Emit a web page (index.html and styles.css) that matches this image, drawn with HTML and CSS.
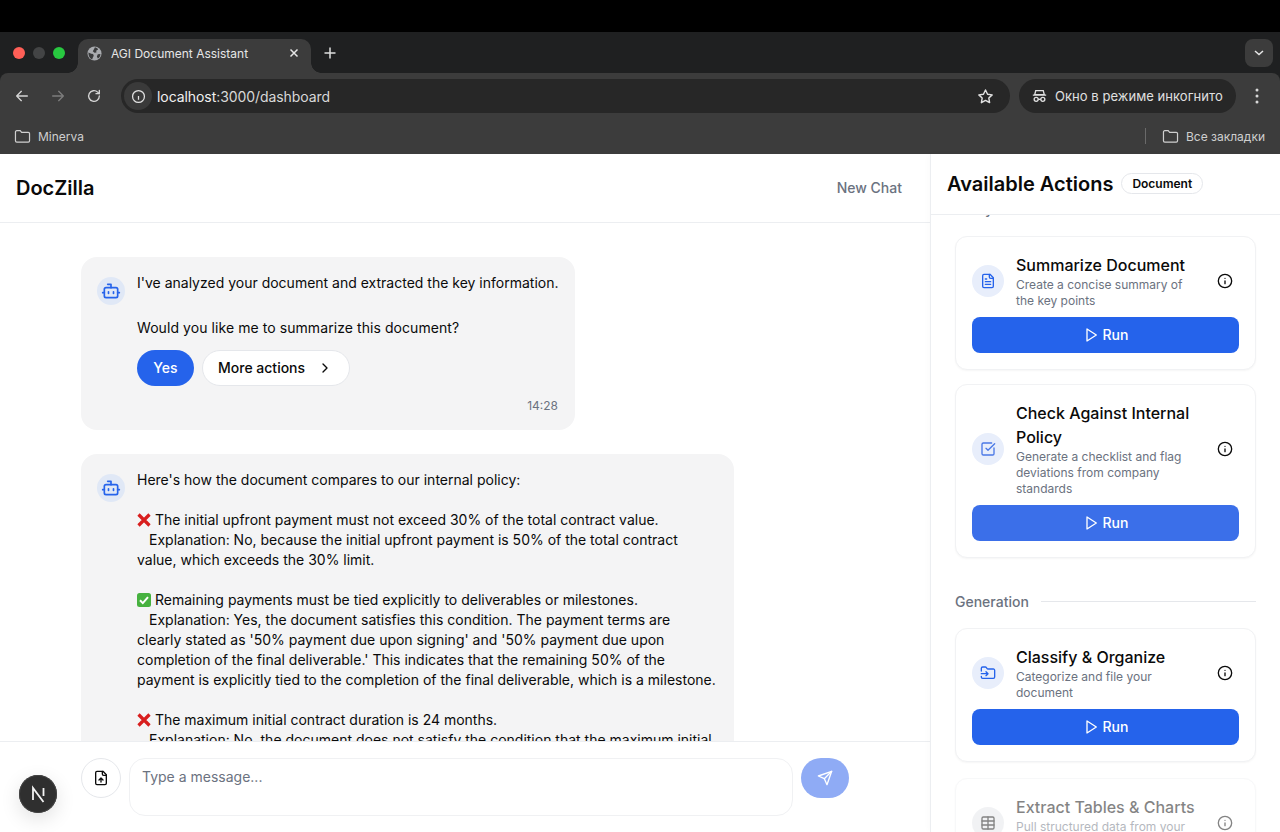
FILE: index.html
```html
<!DOCTYPE html>
<html lang="en">
<head>
<meta charset="utf-8">
<title>AGI Document Assistant</title>
<link rel="stylesheet" href="styles.css">
</head>
<body>
<svg class="sprite" aria-hidden="true">
  <symbol id="i-bot" viewBox="0 0 24 24"><path d="M12 8V4H8"/><rect x="4" y="8" width="16" height="12" rx="2"/><path d="M2 14h2M20 14h2M15 13v2M9 13v2"/></symbol>
  <symbol id="i-file" viewBox="0 0 24 24"><path d="M15 2H6a2 2 0 0 0-2 2v16a2 2 0 0 0 2 2h12a2 2 0 0 0 2-2V7Z"/><path d="M14 2v4a2 2 0 0 0 2 2h4M10 9H8M16 13H8M16 17H8"/></symbol>
  <symbol id="i-check" viewBox="0 0 24 24"><path d="M21 10.5V19a2 2 0 0 1-2 2H5a2 2 0 0 1-2-2V5a2 2 0 0 1 2-2h12.5"/><path d="m9 11 3 3L22 4"/></symbol>
  <symbol id="i-folder-in" viewBox="0 0 24 24"><path d="M2 9V5a2 2 0 0 1 2-2h3.9a2 2 0 0 1 1.69.9l.81 1.2a2 2 0 0 0 1.67.9H20a2 2 0 0 1 2 2v10a2 2 0 0 1-2 2H4a2 2 0 0 1-2-2v-1"/><path d="M2 13h10M9 16l3-3-3-3"/></symbol>
  <symbol id="i-table" viewBox="0 0 24 24"><rect x="3" y="3" width="18" height="18" rx="2"/><path d="M12 3v18M3 9h18M3 15h18"/></symbol>
  <symbol id="i-info" viewBox="0 0 24 24"><circle cx="12" cy="12" r="10"/><path d="M12 16v-4M12 8h.01"/></symbol>
  <symbol id="i-play" viewBox="0 0 24 24"><path d="M6 3l14 9-14 9V3Z"/></symbol>
  <symbol id="i-send" viewBox="0 0 24 24"><path d="m22 2-7 20-4-9-9-4Z"/><path d="M22 2 11 13"/></symbol>
  <symbol id="i-chevron" viewBox="0 0 24 24"><path d="m9 18 6-6-6-6"/></symbol>
  <symbol id="i-file-up" viewBox="0 0 24 24"><path d="M15 2H6a2 2 0 0 0-2 2v16a2 2 0 0 0 2 2h12a2 2 0 0 0 2-2V7Z"/><path d="M14 2v4a2 2 0 0 0 2 2h4M12 12v6M15 15l-3-3-3 3"/></symbol>
  <symbol id="i-folder" viewBox="0 0 18 16"><path d="M1.500 3.200c0-.8.6-1.400 1.400-1.400h3.600l1.600 1.800h7.100c.8 0 1.300.6 1.300 1.300v7.700c0 .8-.6 1.400-1.300 1.400H2.900c-.8 0-1.400-.6-1.400-1.400Z"/></symbol>
  <symbol id="i-no" viewBox="0 0 14 14"><path class="no-mark" d="M1.500 1.500 12.500 12.500M12.500 1.500 1.500 12.500"/></symbol>
  <symbol id="i-yes" viewBox="0 0 14 14"><rect class="yes-box" x="0" y="0" width="14" height="14" rx="2.500"/><path class="yes-mark" d="m3 7.300 2.800 2.800L11 4.200"/></symbol>
</svg>

<div class="top-black"></div>

<div class="tabstrip">
  <div class="lights">
    <span class="light light-red"></span>
    <span class="light light-grey"></span>
    <span class="light light-green"></span>
  </div>
  <div class="tab">
    <svg class="globe" viewBox="0 0 16 16"><circle cx="8" cy="8" r="7.500" fill="#a9abaf"/><path d="M8.500 1.200c2 .5 3 1.300 3.300 2.600L9.800 5.100l.3 1.700-2.200.4L6.200 5.600l.9-1.500ZM1.500 7l3 1.300 2 .3.700 1.700L6 12.700l-.5 1.800C3 13.300 1.400 10.800 1.500 7ZM11.500 8.800l2.800-.4c0 2-1 3.900-2.700 5l-1.100-2.100Z" fill="#3a3b3c"/></svg>
    <span class="tab-title">AGI Document Assistant</span>
    <svg class="tab-close" viewBox="0 0 10 10"><path d="M1.500 1.500l7 7M8.500 1.500l-7 7"/></svg>
  </div>
  <svg class="new-tab" viewBox="0 0 12 12"><path d="M6 .5v11M.5 6h11"/></svg>
  <div class="strip-spacer"></div>
  <div class="tab-menu"><svg viewBox="0 0 10 6"><path d="M1 1l4 3.600L9 1"/></svg></div>
</div>

<div class="toolbar">
  <svg class="nav-icon" viewBox="0 0 24 24"><path d="M20 12H4M11 5l-7 7 7 7"/></svg>
  <svg class="nav-icon nav-off" viewBox="0 0 24 24"><path d="M4 12h16M13 5l7 7-7 7"/></svg>
  <svg class="nav-icon" viewBox="0 0 24 24"><path d="M20 12a8 8 0 1 1-2.500-5.800L20 8.500"/><path d="M20 3.500v5h-5"/></svg>
  <div class="omnibox">
    <span class="site-info"><svg viewBox="0 0 24 24"><circle cx="12" cy="12" r="9.500"/><path d="M12 17v-6M12 7.500h.01"/></svg></span>
    <span class="url"><span class="url-host">localhost</span><span class="url-rest">:3000/dashboard</span></span>
    <svg class="star" viewBox="0 0 24 24"><path d="m12 2.800 2.900 6 6.500.9-4.700 4.500 1.100 6.500-5.800-3.100-5.800 3.100 1.100-6.500L2.600 9.700l6.500-.9Z"/></svg>
  </div>
  <div class="incognito">
    <svg class="hat" viewBox="0 0 18 16"><path d="M4.500 1.500h9l1.300 5H3.200ZM1 7h16"/><circle cx="5" cy="12" r="2.400"/><circle cx="13" cy="12" r="2.400"/><path d="M7.400 12h3.200"/></svg>
    <span>Окно в режиме инкогнито</span>
  </div>
  <svg class="kebab" viewBox="0 0 4 16"><circle cx="2" cy="2" r="1.500"/><circle cx="2" cy="8" r="1.500"/><circle cx="2" cy="14" r="1.500"/></svg>
</div>

<div class="bookmarks">
  <svg class="bm-folder"><use href="#i-folder"/></svg>
  <span class="bm-label">Minerva</span>
  <div class="strip-spacer"></div>
  <span class="bm-divider"></span>
  <svg class="bm-folder"><use href="#i-folder"/></svg>
  <span class="bm-label">Все закладки</span>
</div>

<div class="app">
  <main class="chat">
    <header class="chat-head">
      <h1 class="brand">DocZilla</h1>
      <span class="new-chat">New Chat</span>
    </header>

    <div class="messages">
      <article class="bubble bubble-first">
        <span class="avatar"><svg class="icon icon-blue"><use href="#i-bot"/></svg></span>
        <div class="bubble-body">
          <p class="line">I've analyzed your document and extracted the key information.</p>
          <p class="line line-question">Would you like me to summarize this document?</p>
          <div class="quick">
            <span class="pill pill-yes">Yes</span>
            <span class="pill pill-more">More actions <svg class="icon"><use href="#i-chevron"/></svg></span>
          </div>
          <time class="stamp">14:28</time>
        </div>
      </article>

      <article class="bubble bubble-second">
        <span class="avatar"><svg class="icon icon-blue"><use href="#i-bot"/></svg></span>
        <div class="bubble-body">
          <p class="line">Here's how the document compares to our internal policy:</p>
          <p class="line block"><svg class="emoji"><use href="#i-no"/></svg> The initial upfront payment must not exceed 30% of the total contract value.<br><span class="indent"></span>Explanation: No, because the initial upfront payment is 50% of the total contract value, which exceeds the 30% limit.</p>
          <p class="line block"><svg class="emoji"><use href="#i-yes"/></svg> Remaining payments must be tied explicitly to deliverables or milestones.<br><span class="indent"></span>Explanation: Yes, the document satisfies this condition. The payment terms are clearly stated as '50% payment due upon signing' and '50% payment due upon completion of the final deliverable.' This indicates that the remaining 50% of the payment is explicitly tied to the completion of the final deliverable, which is a milestone.</p>
          <p class="line block"><svg class="emoji"><use href="#i-no"/></svg> The maximum initial contract duration is 24 months.<br><span class="indent"></span>Explanation: No, the document does not satisfy the condition that the maximum initial contract duration is 24 months.</p>
        </div>
      </article>
    </div>

    <footer class="composer">
      <span class="attach"><svg class="icon icon-dark"><use href="#i-file-up"/></svg></span>
      <div class="input">Type a message...</div>
      <span class="send"><svg class="icon icon-white"><use href="#i-send"/></svg></span>
    </footer>
  </main>

  <aside class="panel">
    <header class="panel-head">
      <h2 class="panel-title">Available Actions</h2>
      <span class="badge">Document</span>
    </header>
    <div class="panel-scroll">
      <div class="section-label section-clipped"><span>Analysis</span></div>

      <section class="card">
        <div class="card-row">
          <span class="card-icon"><svg class="icon icon-blue"><use href="#i-file"/></svg></span>
          <div class="card-text">
            <h3 class="card-title">Summarize Document</h3>
            <p class="card-desc">Create a concise summary of the key points</p>
          </div>
          <span class="card-info"><svg class="icon"><use href="#i-info"/></svg></span>
        </div>
        <div class="run"><svg class="icon"><use href="#i-play"/></svg>Run</div>
      </section>

      <section class="card card-entering">
        <div class="card-row">
          <span class="card-icon"><svg class="icon icon-soft"><use href="#i-check"/></svg></span>
          <div class="card-text">
            <h3 class="card-title">Check Against Internal Policy</h3>
            <p class="card-desc">Generate a checklist and flag deviations from company standards</p>
          </div>
          <span class="card-info"><svg class="icon"><use href="#i-info"/></svg></span>
        </div>
        <div class="run run-soft"><svg class="icon"><use href="#i-play"/></svg>Run</div>
      </section>

      <div class="section-label"><span>Generation</span></div>

      <section class="card">
        <div class="card-row">
          <span class="card-icon"><svg class="icon icon-blue"><use href="#i-folder-in"/></svg></span>
          <div class="card-text">
            <h3 class="card-title">Classify &amp; Organize</h3>
            <p class="card-desc">Categorize and file your document</p>
          </div>
          <span class="card-info"><svg class="icon"><use href="#i-info"/></svg></span>
        </div>
        <div class="run"><svg class="icon"><use href="#i-play"/></svg>Run</div>
      </section>

      <section class="card card-faded">
        <div class="card-row">
          <span class="card-icon"><svg class="icon"><use href="#i-table"/></svg></span>
          <div class="card-text">
            <h3 class="card-title">Extract Tables &amp; Charts</h3>
            <p class="card-desc">Pull structured data from your document</p>
          </div>
          <span class="card-info"><svg class="icon"><use href="#i-info"/></svg></span>
        </div>
        <div class="run"><svg class="icon"><use href="#i-play"/></svg>Run</div>
      </section>
    </div>
  </aside>
</div>

<div class="next-badge">
  <svg viewBox="0 0 38 38"><path class="next-n" d="M14 25V13l10.500 14M24.500 13v8"/></svg>
</div>
</body>
</html>
```

FILE: styles.css
```css
* { box-sizing: border-box; }

html, body {
  margin: 0;
  height: 832px;
  overflow: hidden;
}

body {
  display: flex;
  flex-direction: column;
  background: #1f2021;
  color: #0a0a0a;
  font-family: Inter, "Liberation Sans", sans-serif;
}

h1, h2, h3, p { margin: 0; }

.sprite { display: none; }

/* ---------- icons ---------- */
.icon {
  width: 16px;
  height: 16px;
  flex: none;
  fill: none;
  stroke: currentColor;
  stroke-width: 2;
  stroke-linecap: round;
  stroke-linejoin: round;
}
.icon-blue { color: #2563eb; }
.icon-soft { color: #4a78e6; }
.icon-dark { color: #0a0a0a; }
.icon-white { color: #fff; }

/* ---------- browser chrome ---------- */
.top-black { height: 32px; flex: none; background: #000; }

.tabstrip {
  height: 41px;
  flex: none;
  display: flex;
  align-items: flex-end;
  background: #1f2021;
  color: #e6e6e6;
}

.lights {
  display: flex;
  gap: 8px;
  align-self: center;
  padding-left: 13px;
  width: 78px;
}
.light { width: 12px; height: 12px; border-radius: 50%; }
.light-red { background: #ff5f57; }
.light-grey { background: #434445; }
.light-green { background: #28c840; }

.tab {
  position: relative;
  width: 233px;
  height: 34px;
  display: flex;
  align-items: center;
  padding: 0 12px 6px 9px;
  background: #3c3c3c;
  border-radius: 10px 10px 0 0;
  font-size: 12px;
}
.tab::before,
.tab::after {
  content: "";
  position: absolute;
  bottom: 0;
  width: 10px;
  height: 10px;
}
.tab::before {
  left: -10px;
  background: radial-gradient(circle at 0 0, #1f2021 9.500px, #3c3c3c 10px);
}
.tab::after {
  right: -10px;
  background: radial-gradient(circle at 100% 0, #1f2021 9.500px, #3c3c3c 10px);
}
.globe { width: 15px; height: 15px; flex: none; }
.tab-title { flex: 1; padding-left: 9px; white-space: nowrap; }
.tab-close {
  width: 10px;
  height: 10px;
  fill: none;
  stroke: #e6e6e6;
  stroke-width: 1.500;
}

.new-tab {
  width: 12px;
  height: 12px;
  margin: 0 0 14px 13px;
  fill: none;
  stroke: #dedede;
  stroke-width: 1.500;
}

.strip-spacer { flex: 1; }

.tab-menu {
  width: 28px;
  height: 28px;
  margin: 0 7px 6px 0;
  display: flex;
  align-items: center;
  justify-content: center;
  border-radius: 8px;
  background: #3c3c3c;
}
.tab-menu svg {
  width: 10px;
  height: 6px;
  fill: none;
  stroke: #e6e6e6;
  stroke-width: 1.500;
}

.toolbar {
  height: 40px;
  flex: none;
  display: flex;
  align-items: flex-end;
  padding-left: 14px;
  background: #3c3c3c;
  border-radius: 8px 8px 0 0;
}

.nav-icon {
  width: 16px;
  height: 16px;
  margin: 0 20px 9px 0;
  fill: none;
  stroke: #d4d4d4;
  stroke-width: 2;
  stroke-linecap: round;
  stroke-linejoin: round;
}
.nav-off { stroke: #7c7c7c; }
.nav-icon:nth-child(3) { margin-right: 19px; }

.omnibox {
  width: 889px;
  height: 34px;
  display: flex;
  align-items: center;
  padding: 0 16px 0 3px;
  border-radius: 17px;
  background: #272727;
}
.site-info {
  width: 28px;
  height: 28px;
  display: flex;
  align-items: center;
  justify-content: center;
  border-radius: 50%;
  background: #3a3a3a;
}
.site-info svg {
  width: 15px;
  height: 15px;
  fill: none;
  stroke: #e2e2e2;
  stroke-width: 2;
}
.url {
  flex: 1;
  padding-left: 5px;
  font-size: 14px;
  letter-spacing: -.07px;
}
.url-host { color: #f0f0f0; }
.url-rest { color: #d8d8d8; }
.star {
  width: 17px;
  height: 17px;
  fill: none;
  stroke: #e2e2e2;
  stroke-width: 2;
  stroke-linejoin: round;
}

.incognito {
  width: 217px;
  height: 34px;
  margin-left: 9px;
  display: flex;
  align-items: center;
  gap: 8px;
  padding-left: 13px;
  border-radius: 17px;
  background: #272727;
  color: #e0e0e0;
  font-size: 13px;
  letter-spacing: .05px;
  white-space: nowrap;
}
.hat {
  width: 15px;
  height: 14px;
  flex: none;
  fill: none;
  stroke: #e0e0e0;
  stroke-width: 1.600;
}

.kebab {
  width: 4px;
  height: 16px;
  margin: 0 0 9px 19px;
  fill: #d8d8d8;
}

.bookmarks {
  height: 41px;
  flex: none;
  display: flex;
  align-items: center;
  padding: 5px 15px 0 14px;
  background: #3c3c3c;
  color: #cfcfcf;
  font-size: 12px;
}
.bm-folder {
  width: 17px;
  height: 15px;
  flex: none;
  fill: none;
  stroke: #cfcfcf;
  stroke-width: 1.300;
}
.bm-label { margin-left: 7px; }
.bm-divider {
  width: 1px;
  height: 16px;
  margin-right: 16px;
  background: #6a6a6a;
}

/* ---------- app ---------- */
.app {
  flex: 1;
  min-height: 0;
  display: flex;
  background: #fff;
}

.chat {
  width: 930px;
  flex: none;
  display: flex;
  flex-direction: column;
  min-height: 0;
}

.chat-head {
  height: 69px;
  flex: none;
  display: flex;
  align-items: center;
  justify-content: space-between;
  padding: 0 28px 0 16px;
  border-bottom: 1px solid #eceef1;
}
.brand { font-size: 20px; font-weight: 600; line-height: 28px; }
.new-chat { font-size: 14px; font-weight: 500; color: #6b7280; padding-bottom: 1px; }

.messages {
  flex: 1;
  min-height: 0;
  overflow: hidden;
  display: flex;
  flex-direction: column;
  align-items: flex-start;
  gap: 24px;
  padding: 34px 0 0 81px;
}

.bubble {
  display: flex;
  flex: none;
  gap: 12px;
  padding: 16px;
  border-radius: 16px;
  background: #f4f4f5;
}
.bubble-first { width: 494px; }
.bubble-second { width: 653px; }

.avatar {
  width: 28px;
  height: 28px;
  flex: none;
  margin-top: 4px;
  display: flex;
  align-items: center;
  justify-content: center;
  border-radius: 50%;
  background: #e0e8f6;
}
.avatar .icon { width: 20px; height: 20px; }

.bubble-body { flex: 1; min-width: 0; }

.line { font-size: 14px; line-height: 20px; }
.line-question { margin-top: 25px; letter-spacing: .07px; }
.block { margin-top: 20px; }
.indent { display: inline-block; width: 12px; }

.emoji {
  width: 14px;
  height: 14px;
  vertical-align: -2px;
}
.no-mark { fill: none; stroke: #d81e1e; stroke-width: 3.200; }
.yes-box { fill: #46b13f; }
.yes-mark { fill: none; stroke: #fff; stroke-width: 2; }

.quick { display: flex; gap: 8px; margin-top: 12px; }

.pill {
  height: 36px;
  display: flex;
  align-items: center;
  border-radius: 18px;
  padding-bottom: 1px;
  font-size: 14px;
  font-weight: 500;
}
.pill-yes {
  width: 57px;
  justify-content: center;
  background: #2563eb;
  color: #fff;
}
.pill-more {
  width: 148px;
  gap: 12px;
  padding-left: 15px;
  background: #fff;
  border: 1px solid #e5e7eb;
}

.stamp {
  display: block;
  margin-top: 12px;
  padding-right: 1px;
  text-align: right;
  font-size: 12px;
  line-height: 16px;
  color: #6b7280;
}

/* ---------- composer ---------- */
.composer {
  height: 91px;
  flex: none;
  display: flex;
  align-items: flex-start;
  gap: 8px;
  padding: 16px 0 0 81px;
  border-top: 1px solid #eceef1;
  background: #fff;
}
.attach {
  width: 40px;
  height: 40px;
  flex: none;
  display: flex;
  align-items: center;
  justify-content: center;
  border: 1px solid #e5e7eb;
  border-radius: 50%;
}
.input {
  width: 664px;
  height: 58px;
  padding: 8px 12px;
  border: 1px solid #f0f1f3;
  border-radius: 16px;
  font-size: 14px;
  line-height: 20px;
  color: #6b7280;
}
.send {
  width: 48px;
  height: 40px;
  display: flex;
  align-items: center;
  justify-content: center;
  border-radius: 20px;
  background: #8fabf5;
}

/* ---------- actions panel ---------- */
.panel {
  width: 350px;
  flex: none;
  display: flex;
  flex-direction: column;
  min-height: 0;
  border-left: 1px solid #eceef1;
  box-shadow: -2px 0 6px rgba(0, 0, 0, .02);
}
.panel-head {
  height: 61px;
  flex: none;
  display: flex;
  align-items: center;
  gap: 8px;
  padding: 0 0 0 16px;
  border-bottom: 1px solid #eceef1;
}
.panel-title { font-size: 20px; font-weight: 600; line-height: 60px; margin-top: -1px; }
.badge {
  height: 21px;
  display: flex;
  align-items: center;
  padding: 0 10px;
  border: 1px solid #e5e7eb;
  border-radius: 11px;
  font-size: 12px;
  font-weight: 600;
  margin-top: -1px;
}

.panel-scroll {
  flex: 1;
  min-height: 0;
  overflow: hidden;
  padding: 0 24px;
}

.section-label {
  display: flex;
  align-items: center;
  gap: 12px;
  height: 20px;
  margin: 33px 0 17px;
  font-size: 14px;
  font-weight: 500;
  color: #6b7280;
}
.section-label::after {
  content: "";
  flex: 1;
  height: 1px;
  background: #e5e7eb;
}
.section-clipped { margin: -17px 0 18px; }

.card {
  margin-bottom: 16px;
  padding: 16px;
  border: 1px solid #f1f2f4;
  border-radius: 12px;
  background: #fff;
  box-shadow: 0 1px 2px rgba(0, 0, 0, .04);
}
.card-entering { margin-top: -2px; margin-bottom: 0; }
.card-faded { opacity: .5; }

.card-row { display: flex; align-items: center; gap: 12px; }

.card-icon {
  width: 32px;
  height: 32px;
  flex: none;
  display: flex;
  align-items: center;
  justify-content: center;
  border-radius: 50%;
  background: #e8eefb;
}
.card-faded .card-icon { background: #e5e7eb; }

.card-text { flex: 1; min-width: 0; }
.card-title {
  font-size: 16px;
  font-weight: 500;
  line-height: 24px;
}
.card-desc { font-size: 12px; line-height: 16px; color: #6b7280; }

.card-info {
  width: 28px;
  flex: none;
  display: flex;
  justify-content: center;
}

.run {
  height: 36px;
  margin-top: 8px;
  padding-bottom: 1px;
  display: flex;
  align-items: center;
  justify-content: center;
  gap: 4px;
  border-radius: 8px;
  background: #2563eb;
  color: #fff;
  font-size: 14px;
  font-weight: 500;
}
.run-soft { background: #3b6fe9; }

/* ---------- next.js dev badge ---------- */
.next-badge {
  position: absolute;
  left: 19px;
  top: 775px;
  width: 38px;
  height: 38px;
  border-radius: 50%;
  background: #2f2f2f;
  box-shadow: inset 0 0 0 1px #454545, 0 6px 20px rgba(0, 0, 0, .12);
}
.next-badge svg { display: block; width: 38px; height: 38px; }
.next-n { fill: none; stroke: #f2f2f2; stroke-width: 1.800; }
```
